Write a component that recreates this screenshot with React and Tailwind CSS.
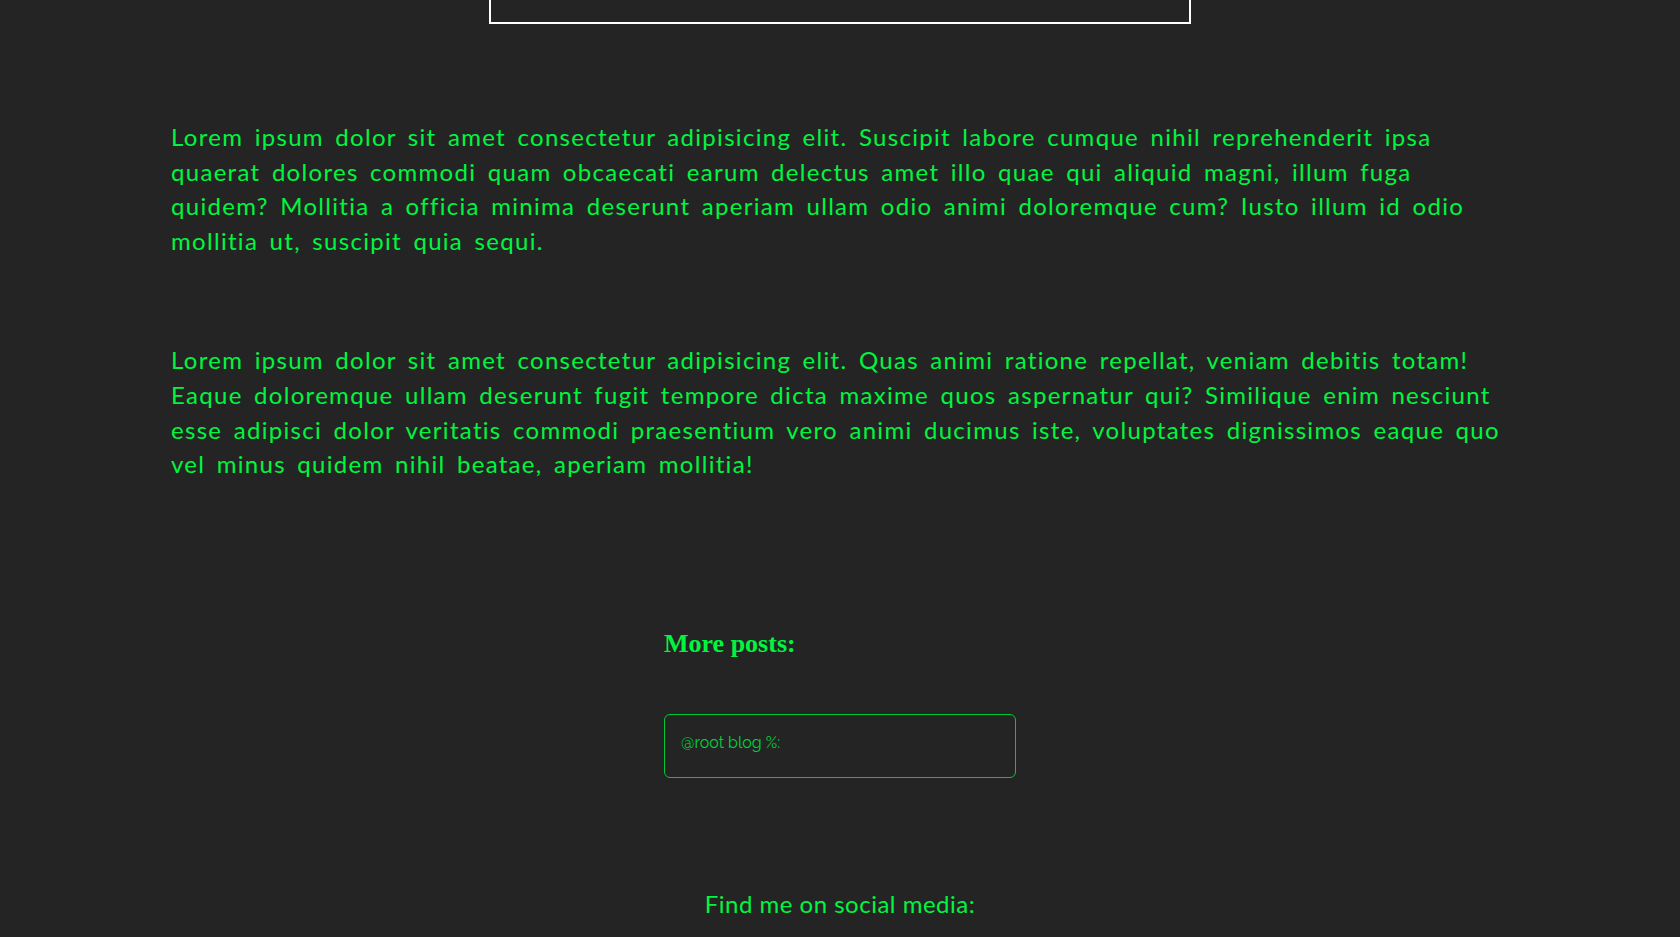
import React from 'react';

const POSTS = [
  'Lorem ipsum dolor sit amet consectetur adipisicing elit. Suscipit labore cumque nihil reprehenderit ipsa quaerat dolores commodi quam obcaecati earum delectus amet illo quae qui aliquid magni, illum fuga quidem? Mollitia a officia minima deserunt aperiam ullam odio animi doloremque cum? Iusto illum id odio mollitia ut, suscipit quia sequi.',
  'Lorem ipsum dolor sit amet consectetur adipisicing elit. Quas animi ratione repellat, veniam debitis totam! Eaque doloremque ullam deserunt fugit tempore dicta maxime quos aspernatur qui? Similique enim nesciunt esse adipisci dolor veritatis commodi praesentium vero animi ducimus iste, voluptates dignissimos eaque quo vel minus quidem nihil beatae, aperiam mollitia!',
];

export default function App() {
  return (
    <div className="min-h-screen bg-[#242424] text-[#00f540] font-['Lato','Noto_Sans',sans-serif] pb-10">
      {/* bottom of the header frame, scrolled past */}
      <div className="mx-auto w-[702px] h-[24px] border-2 border-t-0 border-white"></div>

      <div className="mx-auto w-[1338px] mt-[96px] space-y-[85px]">
        {POSTS.map((text, i) => (
          <p key={i} className="text-[24px] leading-[34.6px] tracking-[1.3px] [word-spacing:4px]">
            {text}
          </p>
        ))}
      </div>

      <div className="mx-auto w-[352px] mt-[147px]">
        <h2 className="font-['Liberation_Serif',serif] font-bold text-[26px] leading-[30px]">More posts:</h2>
        <div className="mt-[55px] h-[64px] border border-[#00c836] rounded-md px-4 pt-[15px]">
          <span className="text-[16px] leading-[20px] text-[#00d23a] font-['Raleway','Lato',sans-serif]">@root blog %:</span>
        </div>
      </div>

      <p className="mt-[111px] text-center text-[24px] leading-[30px] tracking-[0.5px]">Find me on social media:</p>
    </div>
  );
}
